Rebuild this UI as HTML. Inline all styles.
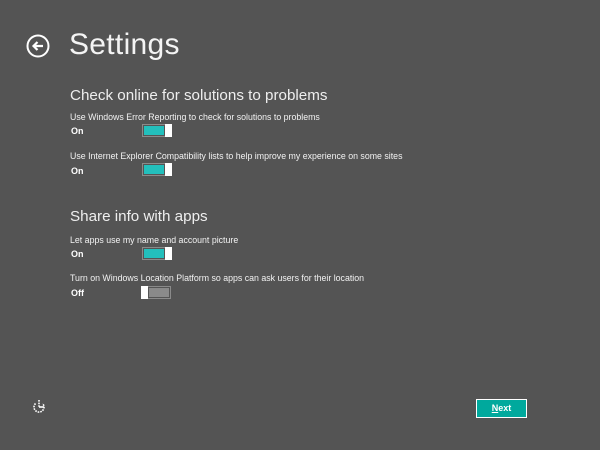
<!DOCTYPE html>
<html><head><style>
body{margin:0;width:600px;height:450px;background:#545454;font-family:"Liberation Sans",sans-serif;color:#fff;position:relative;overflow:hidden}
.a{position:absolute;white-space:nowrap}
h1{position:absolute;left:69px;top:28px;margin:0;font-weight:normal;font-size:30px;color:#f4f4f4;letter-spacing:0.3px}
.h{font-size:15.2px;color:#eee}
.d{font-size:8.8px;color:#f2f2f2}
.o{font-size:9px;font-weight:bold}
.t{position:absolute;width:28px;height:11px;border:1px solid #8a8a8a;background:#545454}
.t .f{position:absolute;left:1px;top:1px;width:20px;height:9px;background:#23bfbc}
.t .k{position:absolute;right:-1px;top:-1px;width:7px;height:13px;background:#fff}
.t.off .f{left:auto;right:1px;width:20px;background:#8a8a8a}
.t.off .k{right:auto;left:-1px}
</style></head><body>
<svg class="a" style="left:26px;top:34px" width="24" height="24" viewBox="0 0 24 24"><circle cx="12" cy="12" r="10.5" fill="none" stroke="#fff" stroke-width="2"/><path d="M17 12H8M11.5 8L7.5 12L11.5 16" fill="none" stroke="#fff" stroke-width="2.2"/></svg>
<h1>Settings</h1>
<div class="a h" style="left:70px;top:87px">Check online for solutions to problems</div>
<div class="a d" style="left:70px;top:112px">Use Windows Error Reporting to check for solutions to problems</div>
<div class="a o" style="left:71px;top:126px">On</div>
<div class="t" style="left:142px;top:124px"><div class="f"></div><div class="k"></div></div>
<div class="a d" style="left:70px;top:151px">Use Internet Explorer Compatibility lists to help improve my experience on some sites</div>
<div class="a o" style="left:71px;top:166px">On</div>
<div class="t" style="left:142px;top:163px"><div class="f"></div><div class="k"></div></div>
<div class="a h" style="left:70px;top:208px">Share info with apps</div>
<div class="a d" style="left:70px;top:235px">Let apps use my name and account picture</div>
<div class="a o" style="left:71px;top:249px">On</div>
<div class="t" style="left:142px;top:247px"><div class="f"></div><div class="k"></div></div>
<div class="a d" style="left:70px;top:273px">Turn on Windows Location Platform so apps can ask users for their location</div>
<div class="a o" style="left:71px;top:288px">Off</div>
<div class="t off" style="left:141px;top:286px"><div class="f"></div><div class="k"></div></div>
<svg class="a" style="left:30px;top:398px" width="18" height="18" viewBox="0 0 18 18"><path d="M9 2V9M5.5 5.5A5 5 0 1 0 12.5 5.5" fill="none" stroke="#fff" stroke-width="1.6" stroke-dasharray="1.6 1"/><path d="M9 9H14" stroke="#fff" stroke-width="1.6"/></svg>
<div class="a" style="left:476px;top:399px;width:49px;height:17px;border:1.5px solid #fff;background:#00a99d;font-size:9px;font-weight:bold;text-align:center;line-height:17px"><u>N</u>ext</div>
</body></html>
